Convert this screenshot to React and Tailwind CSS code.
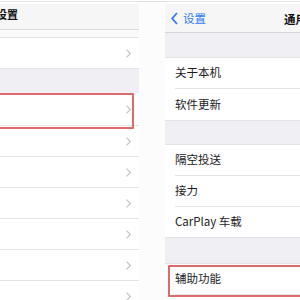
import React from 'react';

const font = { fontFamily: '"Noto Sans CJK SC", "Noto Sans", sans-serif' };

function Chevron({ className = '' }) {
  return (
    <svg width="5" height="9" viewBox="0 0 5 9" className={className}>
      <polyline points="0.6,0.6 4.3,4.5 0.6,8.4" fill="none" stroke="#c4c4c9" strokeWidth="1.2" />
    </svg>
  );
}

// Left screenshot: list rows with chevrons only (labels cut off)
function LeftRow({ h = 'h-[31px]', last = false }) {
  return (
    <div className={`${h} flex items-center justify-end pr-[8px] bg-white ${last ? '' : 'border-b border-[#e3e3e6]'}`}>
      <Chevron />
    </div>
  );
}

function LeftPanel() {
  return (
    <div className="relative w-[139px] shrink-0 flex flex-col">
      <div className="h-[26px] bg-[#f6f6f7] border-b border-[#dadadd] flex items-center">
        <span className="-ml-[4px] -mt-[5px] text-[11px] font-semibold text-[#111]">设置</span>
      </div>
      <div className="h-[8px] bg-[#fafafb] border-b border-[#e3e3e6]" />
      <LeftRow h="h-[30px]" last />
      <div className="h-[25px] bg-[#efeff4] border-t border-[#e3e3e6]" />
      <LeftRow h="h-[33px]" />
      <LeftRow />
      <LeftRow />
      <LeftRow />
      <LeftRow />
      <LeftRow />
      <LeftRow />
      <div className="absolute left-[-4px] top-[89px] w-[138px] h-[36px] border-2 border-[#e06a6a] rounded-[1px]" />
    </div>
  );
}

function RightRow({ label, sep = true }) {
  return (
    <div className="h-[31px] bg-white pl-[10px]">
      <div className={`h-full flex items-center text-[11.5px] text-[#1c1c1e] ${sep ? 'border-b border-[#e3e3e6]' : ''}`}>
        {label}
      </div>
    </div>
  );
}

function RightPanel() {
  return (
    <div className="relative w-[262px] shrink-0 flex flex-col">
      <div className="h-[29px] bg-[#f6f6f7] border-b border-[#d6d6d9] relative flex items-center pl-[6px]">
        <svg width="7" height="13" viewBox="0 0 7 13" className="mt-[1px]">
          <polyline points="6,1 1.2,6.5 6,12" fill="none" stroke="#2f7bf5" strokeWidth="1.8" />
        </svg>
        <span className="ml-[5px] text-[11.5px] text-[#2f7bf5] mt-[1px]">设置</span>
        <span className="absolute left-[119px] top-[7px] text-[11.5px] font-semibold text-[#111]">通用</span>
      </div>
      <div className="h-[25px] bg-[#efeff4] border-b border-[#e3e3e6]" />
      <RightRow label="关于本机" />
      <RightRow label="软件更新" sep={false} />
      <div className="h-[25px] bg-[#efeff4] border-y border-[#e3e3e6]" />
      <RightRow label="隔空投送" />
      <RightRow label="接力" />
      <div className="h-[30px] bg-white pl-[10px] flex items-center text-[11.5px] text-[#1c1c1e]">
        CarPlay 车载
      </div>
      <div className="h-[27px] bg-[#efeff4] border-y border-[#e3e3e6]" />
      <RightRow label="辅助功能" />
      <div className="absolute left-[3px] top-[261px] w-[280px] h-[32px] border-2 border-[#e06a6a] rounded-[1px]" />
    </div>
  );
}

export default function App() {
  return (
    <div className="w-[300px] h-[300px] overflow-hidden bg-white flex flex-col" style={font}>
      <div className="h-[1px] mt-[1px] bg-[#e2e2e4] shrink-0" />
      <div className="flex pt-[2px] bg-white">
        <LeftPanel />
        <div className="w-[26px] shrink-0 bg-[#fcfcfd]" />
        <RightPanel />
      </div>
    </div>
  );
}
